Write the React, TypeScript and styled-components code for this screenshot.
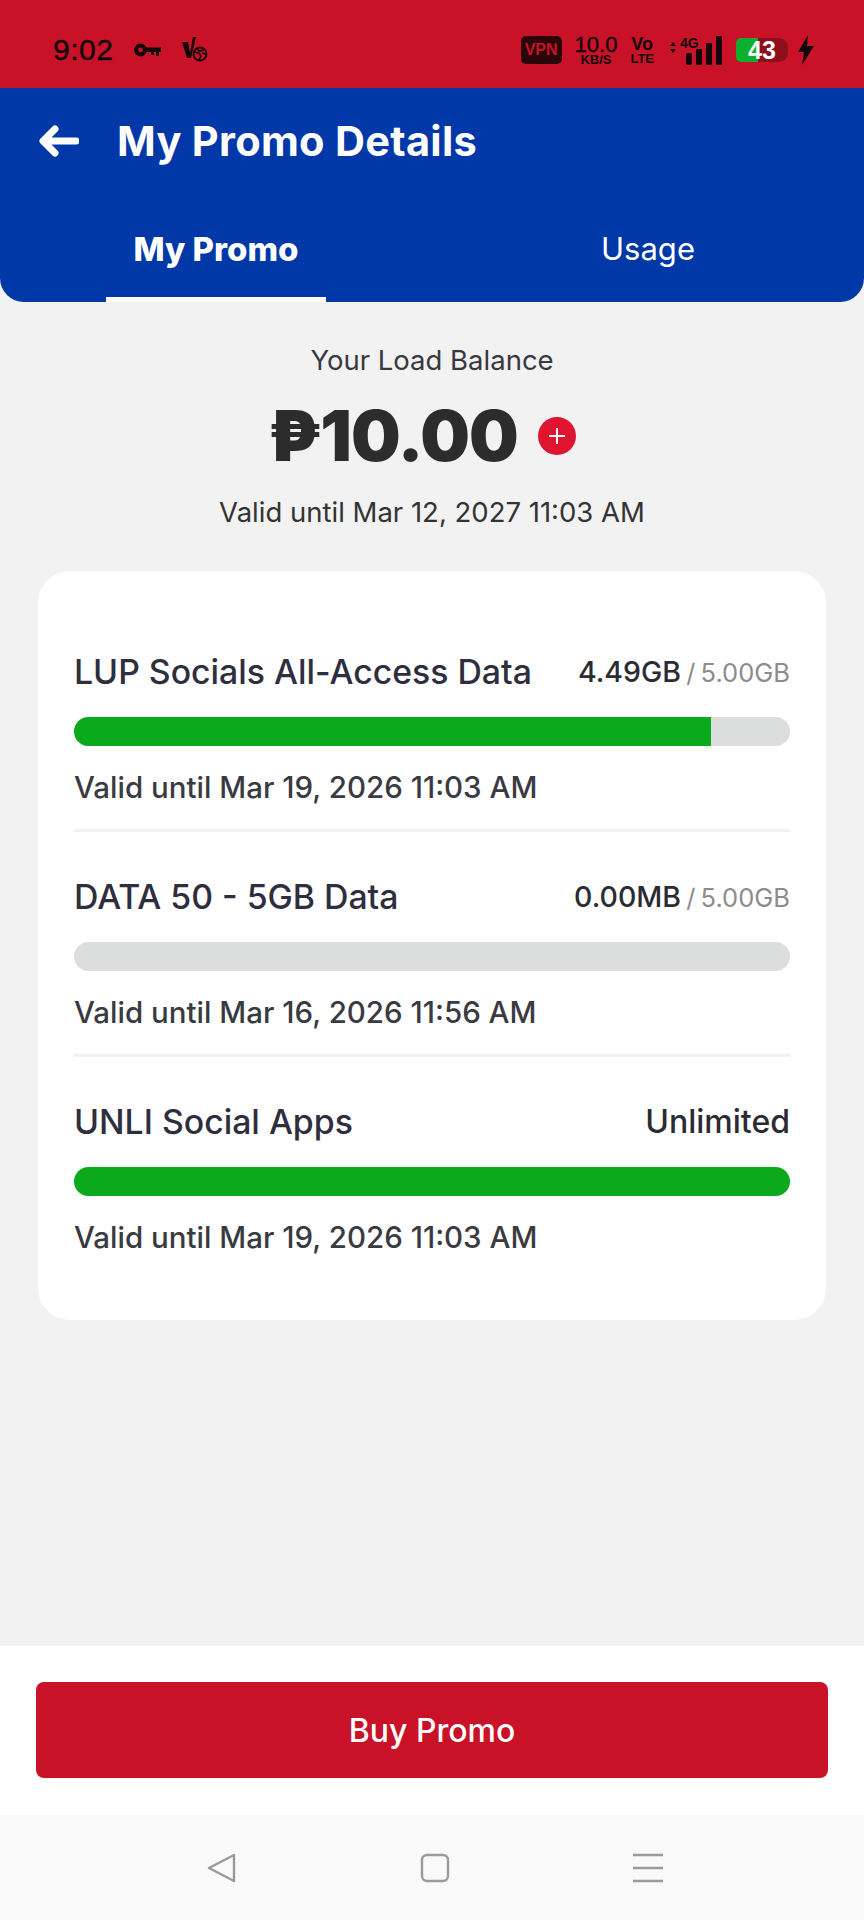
import React from 'react';
import styled, { createGlobalStyle } from 'styled-components';

const GlobalStyle = createGlobalStyle`
  html, body {
    margin: 0;
    padding: 0;
    background: #f2f2f2;
    font-family: 'Inter', 'Liberation Sans', sans-serif;
  }
  * {
    box-sizing: border-box;
  }
`;

const promos = [
  { name: 'LUP Socials All-Access Data', used: '4.49GB', total: '5.00GB', percent: 89, valid: 'Valid until Mar 19, 2026 11:03 AM' },
  { name: 'DATA 50 - 5GB Data', used: '0.00MB', total: '5.00GB', percent: 0, valid: 'Valid until Mar 16, 2026 11:56 AM' },
  { name: 'UNLI Social Apps', used: 'Unlimited', percent: 100, valid: 'Valid until Mar 19, 2026 11:03 AM' },
];

const App: React.FC = () => {
  return (
    <Page>
      <GlobalStyle />
      <StatusBar>
        <StatusLeft>
          <Clock>9:02</Clock>
          <svg width="27" height="16" viewBox="0 0 27 16">
            <circle cx="6.5" cy="8" r="4.4" fill="none" stroke="#12060a" strokeWidth="4" />
            <path d="M11 5.5h16v4.5h-2v4h-3v-4h-2v3h-3v-3h-6z" fill="#12060a" />
          </svg>
          <svg width="26" height="26" viewBox="0 0 26 26">
            <path d="M0 5h6l2 11L11 0h3L9 21H5z" fill="#12060a" />
            <circle cx="18" cy="17" r="6.5" fill="none" stroke="#12060a" strokeWidth="1.8" />
            <path d="M12 15l5 1 2 3-2 4M15 11l2 3 5-1M20 16l4 1" fill="none" stroke="#12060a" strokeWidth="1.6" />
          </svg>
        </StatusLeft>
        <StatusRight>
          <VpnBadge>VPN</VpnBadge>
          <Stacked>
            <StackTop>10.0</StackTop>
            <StackBottom>KB/S</StackBottom>
          </Stacked>
          <Stacked>
            <VoTop>Vo</VoTop>
            <StackBottom>LTE</StackBottom>
          </Stacked>
          <Signal>
            <SignalArrows>
              <svg width="6" height="11" viewBox="0 0 6 11">
                <path d="M3 0l3 4H0zM3 11L0 7h6z" fill="#12060a" />
              </svg>
            </SignalArrows>
            <SignalLabel>4G</SignalLabel>
            <svg width="36" height="29" viewBox="0 0 36 29">
              <rect x="0" y="17" width="6" height="12" rx="2" fill="#12060a" />
              <rect x="10" y="13" width="6" height="16" rx="1" fill="#12060a" />
              <rect x="20" y="7" width="6" height="22" rx="1" fill="#12060a" />
              <rect x="30" y="0" width="6" height="29" rx="1" fill="#12060a" />
            </svg>
          </Signal>
          <Battery>
            <BatteryFill />
            <BatteryText>43</BatteryText>
          </Battery>
          <svg width="18" height="30" viewBox="0 0 18 30">
            <path d="M11 0L1 17h6l-2 13L17 11h-7z" fill="#12060a" />
          </svg>
        </StatusRight>
      </StatusBar>

      <Header>
        <TitleRow>
          <svg width="40" height="32" viewBox="0 0 40 32">
            <path d="M16 4L4 16l12 12M5 16h32" fill="none" stroke="#fff" strokeWidth="7" strokeLinecap="round" strokeLinejoin="round" />
          </svg>
          <Title>My Promo Details</Title>
        </TitleRow>
        <Tabs>
          <Tab $active>My Promo</Tab>
          <Tab>Usage</Tab>
        </Tabs>
      </Header>

      <Content>
        <Balance>
          <BalanceLabel>Your Load Balance</BalanceLabel>
          <AmountRow>
            <Amount>₱10.00</Amount>
            <AddButton>
              <svg width="18" height="18" viewBox="0 0 18 18">
                <path d="M9 1v16M1 9h16" stroke="#fff" strokeWidth="2" />
              </svg>
            </AddButton>
          </AmountRow>
          <BalanceValid>Valid until Mar 12, 2027 11:03 AM</BalanceValid>
        </Balance>

        <Card>
          {promos.map((promo, i) => (
            <PromoRow key={promo.name} $last={i === promos.length - 1}>
              <PromoHead>
                <PromoName>{promo.name}</PromoName>
                <PromoUsage $large={!promo.total}>
                  {promo.used}
                  {promo.total && <PromoTotal> / {promo.total}</PromoTotal>}
                </PromoUsage>
              </PromoHead>
              <Track>
                <Fill style={{ width: `${promo.percent}%` }} />
              </Track>
              <PromoValid>{promo.valid}</PromoValid>
            </PromoRow>
          ))}
        </Card>
      </Content>

      <Footer>
        <BuyButton>Buy Promo</BuyButton>
      </Footer>

      <NavBar>
        <svg width="29" height="30" viewBox="0 0 29 30">
          <path d="M27 2v26L2 15z" fill="none" stroke="#9a9a9a" strokeWidth="2.4" strokeLinejoin="round" />
        </svg>
        <svg width="30" height="30" viewBox="0 0 30 30">
          <rect x="2" y="2" width="26" height="26" rx="5" fill="none" stroke="#9a9a9a" strokeWidth="2.4" />
        </svg>
        <svg width="30" height="30" viewBox="0 0 30 30">
          <path d="M0 2h30M0 15h30M0 28h30" stroke="#9a9a9a" strokeWidth="2.4" />
        </svg>
      </NavBar>
    </Page>
  );
};

// component style
const Page = styled.div`
  width: 864px;
  height: 1920px;
  display: flex;
  flex-direction: column;
  background: #f2f2f2;
  overflow: hidden;
`;

const StatusBar = styled.div`
  height: 88px;
  flex-shrink: 0;
  display: flex;
  align-items: center;
  justify-content: space-between;
  padding: 12px 49px 0 53px;
  background: #c91228;
  color: #12060a;
`;

const StatusLeft = styled.div`
  display: flex;
  align-items: center;
  gap: 21px;
`;

const Clock = styled.span`
  font-family: 'Liberation Sans', sans-serif;
  font-size: 30px;
  letter-spacing: 0.5px;
  -webkit-text-stroke: 0.4px #12060a;
`;

const StatusRight = styled.div`
  display: flex;
  align-items: center;
`;

const VpnBadge = styled.span`
  width: 41px;
  height: 28px;
  display: flex;
  align-items: center;
  justify-content: center;
  margin-right: 13px;
  border-radius: 5px;
  background: #2a0509;
  color: #c91228;
  font-family: 'Liberation Sans', sans-serif;
  font-size: 16px;
  font-weight: 700;
`;

const Stacked = styled.div`
  display: flex;
  flex-direction: column;
  align-items: center;
  margin-right: 13px;
  font-family: 'Liberation Sans', sans-serif;
`;

const StackTop = styled.span`
  font-size: 22px;
  line-height: 19px;
  -webkit-text-stroke: 0.4px #12060a;
`;

const VoTop = styled.span`
  font-size: 18px;
  font-weight: 700;
  line-height: 18px;
`;

const StackBottom = styled.span`
  font-size: 13px;
  font-weight: 700;
  line-height: 12px;
`;

const Signal = styled.div`
  position: relative;
  width: 52px;
  height: 29px;
  display: flex;
  justify-content: flex-end;
  margin: 0 14px 0 3px;
`;

const SignalArrows = styled.span`
  position: absolute;
  top: 1px;
  left: 0;
`;

const SignalLabel = styled.span`
  position: absolute;
  top: -1px;
  left: 10px;
  font-family: 'Liberation Sans', sans-serif;
  font-size: 14px;
  font-weight: 700;
`;

const Battery = styled.div`
  position: relative;
  width: 52px;
  height: 24px;
  display: flex;
  align-items: center;
  justify-content: center;
  margin-right: 9px;
  border-radius: 5px 9px 9px 5px;
  background: #8c0f1d;
`;

const BatteryFill = styled.span`
  position: absolute;
  top: 0;
  bottom: 0;
  left: 0;
  width: 22px;
  border-radius: 5px 0 0 5px;
  background: #0cb02e;
`;

const BatteryText = styled.span`
  position: relative;
  color: #fff;
  font-family: 'Liberation Sans', sans-serif;
  font-size: 25px;
  font-weight: 700;
  line-height: 24px;
`;

const Header = styled.div`
  height: 214px;
  flex-shrink: 0;
  display: flex;
  flex-direction: column;
  justify-content: space-between;
  overflow: hidden;
  border-radius: 0 0 24px 24px;
  background: #0038a8;
`;

const TitleRow = styled.div`
  display: flex;
  align-items: center;
  gap: 38px;
  padding: 30px 0 0 39px;
`;

const Title = styled.h1`
  margin: 0;
  color: #fff;
  font-size: 41.5px;
  font-weight: 700;
  line-height: 46px;
  letter-spacing: 0.3px;
`;

const Tabs = styled.div`
  display: grid;
  grid-template-columns: 1fr 1fr;
`;

const Tab = styled.div<{ $active?: boolean }>`
  position: relative;
  height: 72px;
  text-align: center;
  color: #fff;
  font-size: ${(p) => (p.$active ? '33px' : '31px')};
  font-weight: ${(p) => (p.$active ? 800 : 400)};
  line-height: 38px;

  &::after {
    content: '';
    display: ${(p) => (p.$active ? 'block' : 'none')};
    position: absolute;
    left: 106px;
    bottom: 0;
    width: 220px;
    height: 5px;
    background: #fff;
  }
`;

const Content = styled.div`
  flex: 1;
  display: flex;
  flex-direction: column;
  padding: 40px 38px 0;
`;

const Balance = styled.div`
  display: flex;
  flex-direction: column;
  align-items: center;
  margin-bottom: 41px;
  color: #333;
`;

const BalanceLabel = styled.div`
  font-size: 27.5px;
  line-height: 36px;
  color: #383842;
`;

const AmountRow = styled.div`
  display: flex;
  align-items: center;
  gap: 20px;
  margin: 17px 0 17px;
  transform: translateX(-10px);
`;

const Amount = styled.div`
  color: #2c2c2c;
  font-size: 70px;
  font-weight: 900;
  line-height: 82px;
  letter-spacing: -1px;
`;

const AddButton = styled.span`
  width: 38px;
  height: 38px;
  display: flex;
  align-items: center;
  justify-content: center;
  border-radius: 50%;
  background: #df1530;
`;

const BalanceValid = styled.div`
  font-size: 27.5px;
  line-height: 36px;
  color: #333;
`;

const Card = styled.div`
  height: 749px;
  padding: 36px 36px 0;
  border-radius: 32px;
  background: #fff;
`;

const PromoRow = styled.div<{ $last?: boolean }>`
  height: 225px;
  padding-top: 42px;
  border-bottom: ${(p) => (p.$last ? 'none' : '3px solid #f2f2f2')};
`;

const PromoHead = styled.div`
  display: flex;
  align-items: center;
  justify-content: space-between;
  height: 44px;
  margin-bottom: 24px;
`;

const PromoName = styled.div`
  color: #2e2e3e;
  font-size: 33.8px;
  font-weight: 500;
`;

const PromoUsage = styled.div<{ $large?: boolean }>`
  color: #2b2b33;
  font-size: ${(p) => (p.$large ? '32px' : '28.5px')};
  font-weight: 500;
`;

const PromoTotal = styled.span`
  color: #8c8c8c;
  font-size: 25.5px;
  font-weight: 400;
  word-spacing: -2px;
`;

const Track = styled.div`
  height: 29px;
  overflow: hidden;
  border-radius: 15px;
  background: #dcdddd;
`;

const Fill = styled.div`
  height: 100%;
  background: #0aaa1c;
`;

const PromoValid = styled.div`
  margin-top: 21px;
  color: #3a3a42;
  font-size: 29.5px;
  font-weight: 500;
  line-height: 40px;
`;

const Footer = styled.div`
  height: 169px;
  flex-shrink: 0;
  padding: 36px 36px 0;
  background: #fff;
`;

const BuyButton = styled.button`
  width: 100%;
  height: 96px;
  border: none;
  border-radius: 8px;
  background: #c91228;
  color: #fff;
  font-family: inherit;
  font-size: 32px;
  font-weight: 500;
`;

const NavBar = styled.div`
  height: 105px;
  flex-shrink: 0;
  display: flex;
  align-items: center;
  justify-content: space-between;
  padding: 0 201px 0 207px;
  background: #fafafa;
`;

export default App;
